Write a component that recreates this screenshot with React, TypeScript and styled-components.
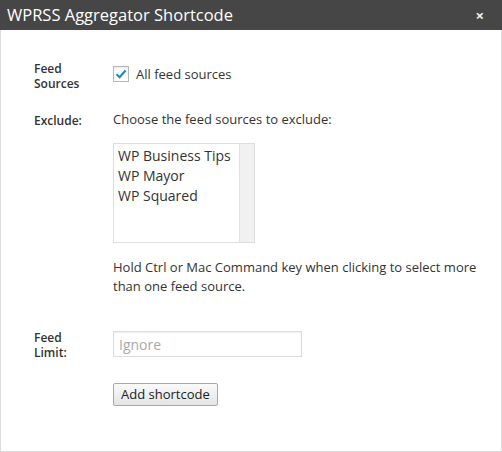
import React from "react";
import styled, { createGlobalStyle } from "styled-components";

const GlobalStyle = createGlobalStyle`
  html, body {
    margin: 0;
    padding: 0;
    background: #fff;
  }
  body {
    font-family: "Open Sans", "Noto Sans", sans-serif;
  }
`;

const Dialog = styled.div`
  width: 502px;
  height: 452px;
  box-sizing: border-box;
  border: 1px solid #dcdcdc;
  border-top: none;
  background: #fff;
  display: flex;
  flex-direction: column;
`;

const TitleBar = styled.div`
  height: 30px;
  margin: 0 -1px;
  background: #464646;
  color: #fff;
  display: flex;
  align-items: center;
  justify-content: space-between;
  padding: 0 18px 0 7px;
  font-size: 16.5px;
  line-height: 30px;
`;

const CloseButton = styled.span`
  font-size: 15px;
  font-weight: 700;
  color: #eee;
  cursor: pointer;
`;

const Form = styled.div`
  display: grid;
  grid-template-columns: 79px 1fr;
  padding: 32px 0 0 33px;
  color: #333;
  font-size: 13px;
`;

const Label = styled.div<{ $top?: number }>`
  font-size: 12px;
  font-weight: 600;
  line-height: 15px;
  color: #333;
  margin-top: ${(p) => p.$top ?? -1}px;
`;

const Field = styled.div<{ $bottom?: number }>`
  display: flex;
  flex-direction: column;
  align-items: flex-start;
  padding-bottom: ${(p) => p.$bottom ?? 0}px;
`;

const CheckRow = styled.label`
  display: flex;
  align-items: center;
  gap: 7px;
  margin-top: 4px;
  line-height: 16px;
`;

const CheckBox = styled.span`
  width: 14px;
  height: 14px;
  border: 1px solid #b4b9be;
  background: #fff;
  display: flex;
  align-items: center;
  justify-content: center;
  box-shadow: inset 0 1px 2px rgba(0, 0, 0, 0.1);
`;

const Text = styled.p<{ $top?: number }>`
  margin: ${(p) => p.$top ?? 0}px 0 0;
  line-height: 19px;
  color: #333;
`;

const ListBox = styled.div`
  margin-top: 14px;
  width: 140px;
  height: 98px;
  border: 1px solid #ddd;
  display: flex;
`;

const Options = styled.div`
  flex: 1;
  padding: 2px 0 0 4px;
  font-size: 14px;
  line-height: 20px;
  color: #333;
`;

const ScrollTrack = styled.div`
  width: 14px;
  border-left: 1px solid #e2e2e2;
  background: #f1f1f1;
`;

const TextInput = styled.input`
  width: 189px;
  height: 26px;
  box-sizing: border-box;
  border: 1px solid #ddd;
  padding: 0 5px;
  font-family: inherit;
  font-size: 14px;
  color: #333;
  box-shadow: inset 0 1px 2px rgba(0, 0, 0, 0.07);
  outline: none;
  &::placeholder {
    color: #aaa;
  }
`;

const Button = styled.button`
  height: 23px;
  padding: 0 7px;
  border: 1px solid #a8a8a8;
  border-radius: 2px;
  background: linear-gradient(#fafafa, #e4e4e4);
  font-family: inherit;
  font-size: 13px;
  color: #222;
  line-height: 21px;
  cursor: pointer;
`;

const sources = ["WP Business Tips", "WP Mayor", "WP Squared"];

const App: React.FC = () => {
  return (
    <>
      <GlobalStyle />
      <Dialog>
        <TitleBar>
          <span>WPRSS Aggregator Shortcode</span>
          <CloseButton>×</CloseButton>
        </TitleBar>
        <Form>
          <Label>
            Feed
            <br />
            Sources
          </Label>
          <Field $bottom={28}>
            <CheckRow>
              <CheckBox>
                <svg width="12" height="12" viewBox="0 0 12 12">
                  <path
                    d="M1.5 6.2 L4.6 9.2 L10.6 2.4"
                    fill="none"
                    stroke="#1e8cbe"
                    strokeWidth="2.2"
                  />
                </svg>
              </CheckBox>
              All feed sources
            </CheckRow>
          </Field>

          <Label $top={3}>Exclude:</Label>
          <Field $bottom={35}>
            <Text>Choose the feed sources to exclude:</Text>
            <ListBox>
              <Options>
                {sources.map((s) => (
                  <div key={s}>{s}</div>
                ))}
              </Options>
              <ScrollTrack />
            </ListBox>
            <Text $top={15}>
              Hold Ctrl or Mac Command key when clicking to select more
              <br />
              than one feed source.
            </Text>
          </Field>

          <Label>
            Feed
            <br />
            Limit:
          </Label>
          <Field $bottom={26}>
            <TextInput placeholder="Ignore" />
          </Field>

          <div />
          <Field>
            <Button>Add shortcode</Button>
          </Field>
        </Form>
      </Dialog>
    </>
  );
};

export default App;
